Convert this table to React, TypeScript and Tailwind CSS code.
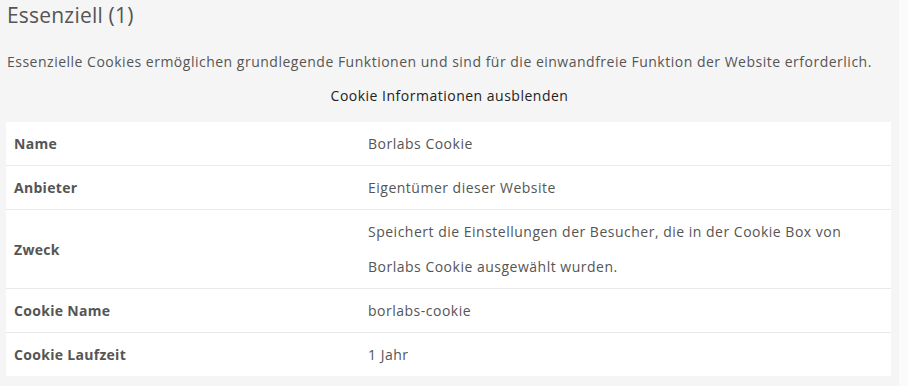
const rows: { label: string; value: string }[] = [
  { label: 'Name', value: 'Borlabs Cookie' },
  { label: 'Anbieter', value: 'Eigentümer dieser Website' },
  {
    label: 'Zweck',
    value:
      'Speichert die Einstellungen der Besucher, die in der Cookie Box von Borlabs Cookie ausgewählt wurden.',
  },
  { label: 'Cookie Name', value: 'borlabs-cookie' },
  { label: 'Cookie Laufzeit', value: '1 Jahr' },
]

export default function App() {
  return (
    <div className="h-[386px] w-[908px] bg-[#fbfbfb] font-['Open_Sans',sans-serif]">
      <div className="h-full w-[899px] bg-[#f5f5f5] px-[6px]">
        <h3 className="pl-[1px] pt-[1px] text-[21px] leading-[28px] tracking-[0.2px] text-[#555]">Essenziell (1)</h3>
        <p className="mt-[23px] pl-[1px] text-[14px] leading-[20px] tracking-[0.5px] text-[#555]">
          Essenzielle Cookies ermöglichen grundlegende Funktionen und sind für die einwandfreie Funktion der
          Website erforderlich.
        </p>
        <p className="mt-[14px] text-center text-[14px] leading-[20px] tracking-[0.5px] text-[#222]">
          <a href="#">Cookie Informationen ausblenden</a>
        </p>
        <table className="mt-[16px] w-[885px] border-collapse bg-white text-[14px]">
          <tbody>
            {rows.map((row, i) => (
              <tr key={row.label} className={i < rows.length - 1 ? 'border-b border-[#e9e9e9]' : ''}>
                <th className="w-[354px] px-2 py-1 text-left align-middle font-bold leading-[35px] tracking-[0.3px] text-[#555]">
                  {row.label}
                </th>
                <td className="px-2 py-1 align-middle leading-[35px] tracking-[0.5px] text-[#555]">{row.value}</td>
              </tr>
            ))}
          </tbody>
        </table>
      </div>
    </div>
  )
}
